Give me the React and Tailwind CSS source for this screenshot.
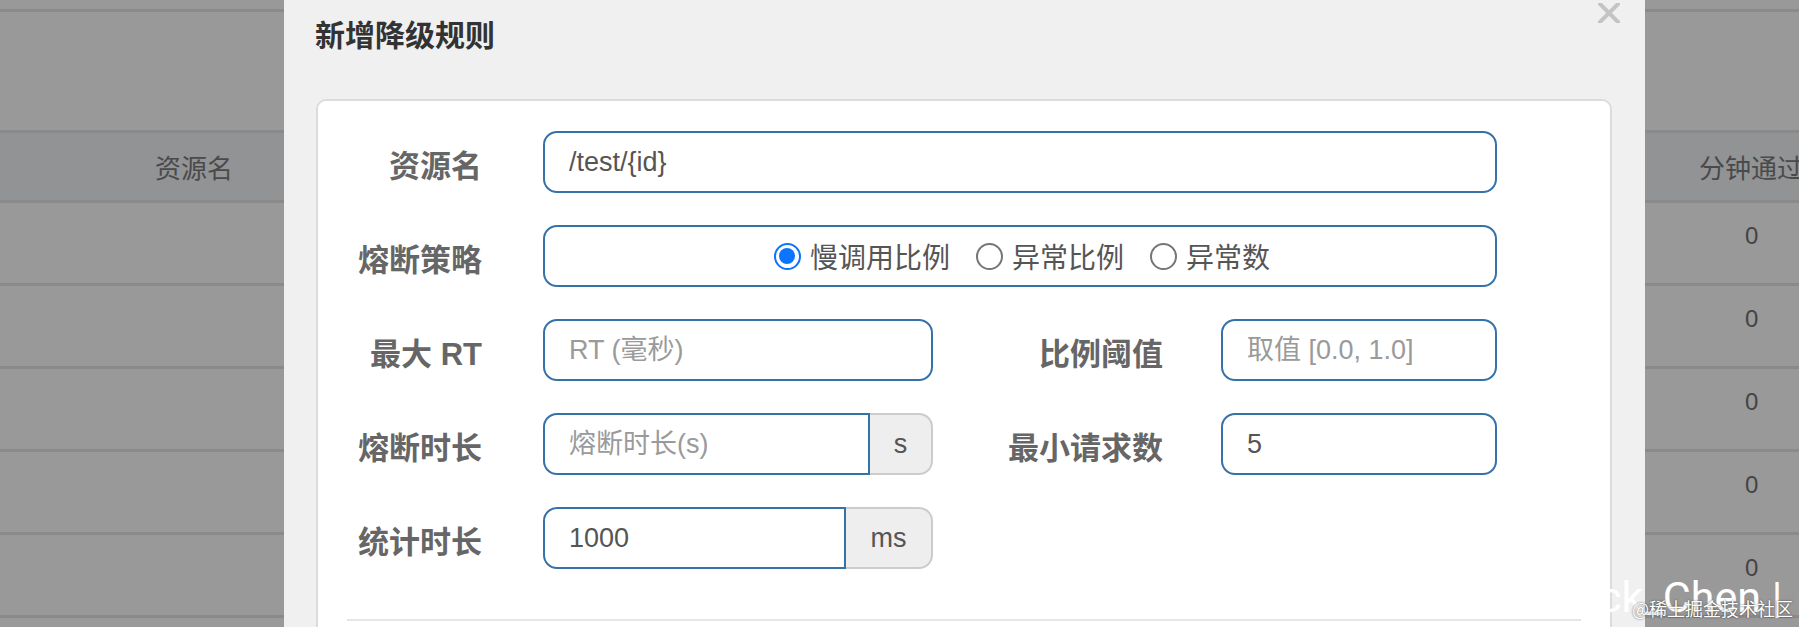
import React from "react";

const labelCls =
  "text-right pt-[8px] leading-none text-[31px] font-bold text-[#666666] whitespace-nowrap";
const inputCls =
  "h-[62px] border-2 border-[#3572aa] bg-white px-[24px] text-[27px] text-[#555555] outline-none placeholder:text-[#9a9a9a]";

const Radio = ({ checked, label }) => (
  <label className="flex items-center gap-[9px]">
    {checked ? (
      <span className="w-[27px] h-[27px] rounded-full border-[2.5px] border-[#0b75ff] bg-white flex items-center justify-center">
        <span className="w-[16px] h-[16px] rounded-full bg-[#0b75ff]" />
      </span>
    ) : (
      <span className="w-[27px] h-[27px] rounded-full border-2 border-[#767676] bg-white" />
    )}
    <span className="text-[28px] leading-none text-[#555555] font-['Noto_Sans_CJK_SC',sans-serif]">
      {label}
    </span>
  </label>
);

const BgRow = ({ zero }) => (
  <div className="h-[83px] border-b-[3px] border-[#8a8a8a] flex items-center pb-[14px]">
    <div className="flex-1" />
    <div className="w-[100px] pl-[46px] text-[24px] text-[#444444]">{zero}</div>
  </div>
);

export default function App() {
  return (
    <div className="relative w-[1799px] h-[627px] overflow-hidden bg-[#999999] font-['Liberation_Sans','Noto_Sans_CJK_SC',sans-serif]">
      {/* table behind the backdrop */}
      <div className="flex flex-col">
        <div className="h-[12px] border-b-[3px] border-[#8a8a8a]" />
        <div className="h-[121px] border-b-[3px] border-[#8a8a8a]" />
        <div className="h-[70px] border-b-[3px] border-[#8a8a8a] bg-[#929395] flex items-center text-[26px] text-[#4a4a4a]">
          <div className="w-[388px] text-center font-['Noto_Sans_CJK_SC',sans-serif]">资源名</div>
          <div className="flex-1" />
          <div className="w-[100px] whitespace-nowrap font-['Noto_Sans_CJK_SC',sans-serif]">分钟通过</div>
        </div>
        <BgRow zero="0" />
        <BgRow zero="0" />
        <BgRow zero="0" />
        <BgRow zero="0" />
        <BgRow zero="0" />
        <BgRow zero="" />
      </div>

      {/* modal */}
      <div className="absolute left-[284px] top-0 w-[1361px] h-[700px] bg-[#f0f0f0]">
        <svg
          className="absolute right-[25px] top-[3px]"
          width="22"
          height="20"
          viewBox="0 0 22 20"
        >
          <path d="M2 1 L20 19 M20 1 L2 19" stroke="#c4c4c4" strokeWidth="4" strokeLinecap="square" />
        </svg>

        <h4 className="pl-[31px] pt-[18px] text-[30px] leading-none font-bold text-[#333333] font-['Noto_Sans_CJK_SC',sans-serif]">
          新增降级规则
        </h4>

        <div className="ml-[32px] mt-[51px] w-[1296px] border-2 border-[#dcdcdc] rounded-[10px] bg-white pt-[30px] pb-[40px]">
          <div className="flex flex-col gap-[32px]">
            <div className="flex items-center">
              <div className={`${labelCls} w-[164px]`}>资源名</div>
              <input readOnly defaultValue="/test/{id}" className={`${inputCls} ml-[61px] w-[954px] rounded-[14px]`} />
            </div>

            <div className="flex items-center">
              <div className={`${labelCls} w-[164px]`}>熔断策略</div>
              <div className="ml-[61px] w-[954px] h-[62px] border-2 border-[#3572aa] rounded-[14px] flex items-center justify-center gap-[26px] pl-[4px]">
                <Radio checked label="慢调用比例" />
                <Radio label="异常比例" />
                <Radio label="异常数" />
              </div>
            </div>

            <div className="flex items-center">
              <div className={`${labelCls} w-[164px]`}>最大 RT</div>
              <input readOnly placeholder="RT (毫秒)" className={`${inputCls} ml-[61px] w-[390px] rounded-[14px]`} />
              <div className={`${labelCls} w-[230px]`}>比例阈值</div>
              <input readOnly placeholder="取值 [0.0, 1.0]" className={`${inputCls} ml-[58px] w-[276px] rounded-[14px]`} />
            </div>

            <div className="flex items-center">
              <div className={`${labelCls} w-[164px]`}>熔断时长</div>
              <div className="ml-[61px] w-[390px] flex">
                <input readOnly placeholder="熔断时长(s)" className={`${inputCls} w-[327px] rounded-l-[14px]`} />
                <div className="w-[63px] h-[62px] bg-[#eeeeee] border-2 border-l-0 border-[#cccccc] rounded-r-[14px] flex items-center justify-center text-[27px] text-[#555555]">
                  s
                </div>
              </div>
              <div className={`${labelCls} w-[230px]`}>最小请求数</div>
              <input readOnly defaultValue="5" className={`${inputCls} ml-[58px] w-[276px] rounded-[14px]`} />
            </div>

            <div className="flex items-center">
              <div className={`${labelCls} w-[164px]`}>统计时长</div>
              <div className="ml-[61px] w-[390px] flex">
                <input readOnly defaultValue="1000" className={`${inputCls} w-[303px] rounded-l-[14px]`} />
                <div className="w-[87px] h-[62px] bg-[#eeeeee] border-2 border-l-0 border-[#cccccc] rounded-r-[14px] flex items-center justify-center text-[27px] text-[#555555]">
                  ms
                </div>
              </div>
            </div>
          </div>

          <div className="mx-[29px] mt-[50px] h-[2px] bg-[#e5e5e5]" />
        </div>
      </div>

      {/* watermark */}
      <div className="absolute left-[1552px] top-[576px] text-[43px] leading-none text-white whitespace-nowrap font-['Roboto',sans-serif]">
        Jack_Chen |
      </div>
      <div className="absolute left-[1632px] top-[599px] text-[18px] leading-none text-white whitespace-nowrap font-['Noto_Sans_CJK_SC',sans-serif] [text-shadow:0_0_2px_rgba(0,0,0,0.7)]">
        @稀土掘金技术社区
      </div>
    </div>
  );
}
